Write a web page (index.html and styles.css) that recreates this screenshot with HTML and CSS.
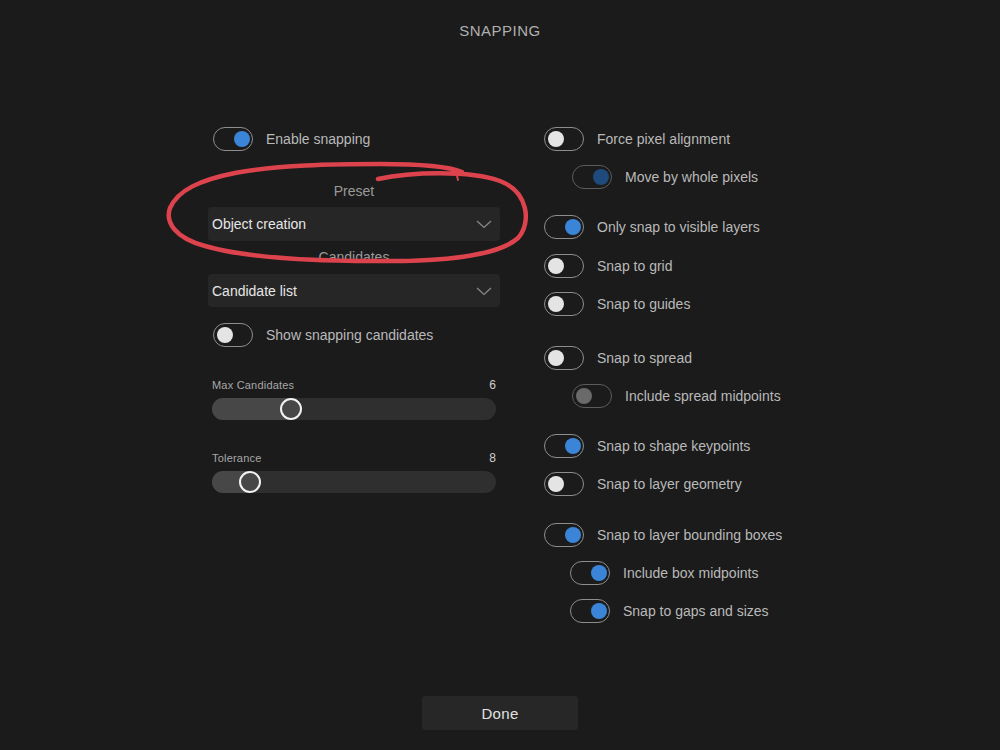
FILE: index.html
```html
<!DOCTYPE html>
<html lang="en">
<head>
<meta charset="utf-8">
<title>Snapping</title>
<link rel="stylesheet" href="styles.css">
</head>
<body>
<div class="page">
  <h1 class="title">SNAPPING</h1>
  <div class="columns">
    <div class="col-left">
      <div class="row">
        <span class="toggle on"><span class="knob"></span></span>
        <span class="label">Enable snapping</span>
      </div>
      <div class="caption preset-cap">Preset</div>
      <div class="select">
        <span>Object creation</span>
        <svg class="chev" width="16" height="9" viewBox="0 0 16 9"><path d="M1 1 L8 7.5 L15 1" fill="none" stroke="#8a8a8a" stroke-width="1.2"/></svg>
      </div>
      <div class="caption cand-cap">Candidates</div>
      <div class="select">
        <span>Candidate list</span>
        <svg class="chev" width="16" height="9" viewBox="0 0 16 9"><path d="M1 1 L8 7.5 L15 1" fill="none" stroke="#8a8a8a" stroke-width="1.2"/></svg>
      </div>
      <div class="row show-row">
        <span class="toggle"><span class="knob"></span></span>
        <span class="label">Show snapping candidates</span>
      </div>
      <div class="slider-block">
        <div class="slider-head"><span>Max Candidates</span><span class="val">6</span></div>
        <div class="track"><div class="fill" style="width:79px"></div><span class="thumb" style="left:68px"></span></div>
      </div>
      <div class="slider-block">
        <div class="slider-head"><span>Tolerance</span><span class="val">8</span></div>
        <div class="track"><div class="fill" style="width:38px"></div><span class="thumb" style="left:27px"></span></div>
      </div>
    </div>
    <div class="col-right">
      <div class="row"><span class="toggle"><span class="knob"></span></span><span class="label">Force pixel alignment</span></div>
      <div class="row sub"><span class="toggle on dim"><span class="knob"></span></span><span class="label">Move by whole pixels</span></div>
      <div class="row gap"><span class="toggle on"><span class="knob"></span></span><span class="label">Only snap to visible layers</span></div>
      <div class="row nudge"><span class="toggle"><span class="knob"></span></span><span class="label">Snap to grid</span></div>
      <div class="row"><span class="toggle"><span class="knob"></span></span><span class="label">Snap to guides</span></div>
      <div class="row gap2"><span class="toggle"><span class="knob"></span></span><span class="label">Snap to spread</span></div>
      <div class="row sub"><span class="toggle dim"><span class="knob"></span></span><span class="label">Include spread midpoints</span></div>
      <div class="row gap"><span class="toggle on"><span class="knob"></span></span><span class="label">Snap to shape keypoints</span></div>
      <div class="row"><span class="toggle"><span class="knob"></span></span><span class="label">Snap to layer geometry</span></div>
      <div class="row gap3"><span class="toggle on"><span class="knob"></span></span><span class="label">Snap to layer bounding boxes</span></div>
      <div class="row sub2"><span class="toggle on"><span class="knob"></span></span><span class="label">Include box midpoints</span></div>
      <div class="row sub2"><span class="toggle on"><span class="knob"></span></span><span class="label">Snap to gaps and sizes</span></div>
    </div>
  </div>
  <div class="footer"><button class="done">Done</button></div>
  <svg class="scribble" width="1000" height="750" viewBox="0 0 1000 750">
    <path d="M378 179 C 410 172, 470 170, 500 181 C 528 192, 532 222, 518 238 C 498 256, 440 262, 373 261 C 320 261, 250 259, 205 246 C 175 238, 165 222, 170 208 C 178 190, 200 180, 235 173 C 280 165, 330 164, 380 164 C 420 164, 450 167, 462 172"
      fill="none" stroke="#dd434d" stroke-width="4.5" stroke-linecap="round"/>
    <path d="M456 171 L458 180" fill="none" stroke="#dd434d" stroke-width="2" stroke-linecap="round"/>
  </svg>
</div>
</body>
</html>
```
FILE: styles.css
```css
* { box-sizing: border-box; }
html, body { margin: 0; padding: 0; }
body {
  background: #1b1b1b;
  font-family: "Liberation Sans", Arial, sans-serif;
  color: #b9b9b9;
}
.page {
  position: relative;
  width: 1000px;
  height: 750px;
  display: flex;
  flex-direction: column;
  align-items: center;
  overflow: hidden;
}
.title {
  margin: 21px 0 0;
  font-size: 15px;
  line-height: 20px;
  font-weight: normal;
  letter-spacing: 0.5px;
  color: #b0b0b0;
}
.columns {
  display: flex;
  gap: 44px;
  margin-top: 86px;
  width: 584px;
}
.col-left { width: 292px; display: flex; flex-direction: column; }
.col-right { width: 248px; display: flex; flex-direction: column; }

.row { display: flex; align-items: center; gap: 13px; height: 24px; margin-left: 5px; }
.col-right .row { margin-left: 0; margin-bottom: 14px; }
.col-right .row.sub { margin-left: 28px; margin-bottom: 14px; }
.col-right .row.sub2 { margin-left: 26px; }
.col-right .row.gap { margin-top: 12px; }
.col-right .row.gap2 { margin-top: 16px; }
.col-right .row.gap3 { margin-top: 13px; }
.col-right .row.nudge { margin-top: 1px; }
.label { font-size: 14px; color: #b9b9b9; letter-spacing: 0; }

.toggle {
  position: relative;
  flex: none;
  width: 40px;
  height: 24px;
  border: 1.5px solid #8e8e8e;
  border-radius: 12px;
}
.toggle .knob {
  position: absolute;
  top: 2.5px;
  left: 2.5px;
  width: 16px;
  height: 16px;
  border-radius: 50%;
  background: #e4e4e4;
}
.toggle.on .knob { left: auto; right: 2.5px; background: #3b85d8; }
.toggle.dim { border-color: #5c5c5c; }
.toggle.dim .knob { background: #6a6a6a; }
.toggle.on.dim .knob { background: #1f4b7c; }

.caption {
  text-align: center;
  font-size: 14px;
  line-height: 16px;
  color: #9a9a9a;
}
.preset-cap { margin-top: 32px; }
.cand-cap { margin-top: 8px; }
.select {
  margin-top: 8px;
  height: 34px;
  background: #262626;
  border-radius: 4px;
  display: flex;
  align-items: center;
  justify-content: space-between;
  padding: 0 8px 0 4px;
  font-size: 14px;
  color: #e6e6e6;
}
.cand-cap + .select { margin-top: 9px; height: 33px; }
.chev { margin-top: 1px; }
.show-row { margin-top: 16px; }

.slider-block { margin-top: 31px; padding: 0 4px; }
.slider-head {
  display: flex;
  justify-content: space-between;
  font-size: 11px;
  line-height: 14px;
  letter-spacing: 0.2px;
  color: #a8a8a8;
}
.slider-head .val { font-size: 12px; color: #d0d0d0; }
.track {
  position: relative;
  margin-top: 6px;
  height: 22px;
  border-radius: 11px;
  background: #2f2f2f;
}
.fill {
  height: 22px;
  border-radius: 11px 0 0 11px;
  background: #474747;
}
.thumb {
  position: absolute;
  top: 0;
  width: 22px;
  height: 22px;
  border-radius: 50%;
  border: 2.5px solid #f2f2f2;
  background: #474747;
}

.footer { margin-top: auto; padding-bottom: 20px; }
.done {
  width: 156px;
  height: 34px;
  border: none;
  border-radius: 3px;
  background: #272727;
  color: #e2e2e2;
  font-family: "Liberation Sans", Arial, sans-serif;
  font-size: 15px;
  letter-spacing: 0.3px;
}
.scribble { position: absolute; left: 0; top: 0; pointer-events: none; }
```
